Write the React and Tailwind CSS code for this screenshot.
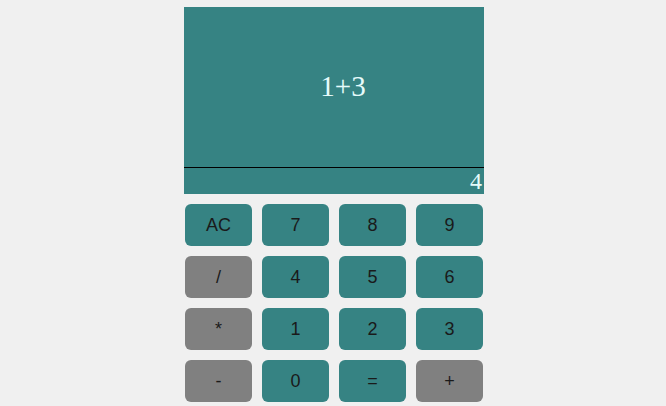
export default function App() {
  const keys = [
    { label: "AC", op: false },
    { label: "7", op: false },
    { label: "8", op: false },
    { label: "9", op: false },
    { label: "/", op: true },
    { label: "4", op: false },
    { label: "5", op: false },
    { label: "6", op: false },
    { label: "*", op: true },
    { label: "1", op: false },
    { label: "2", op: false },
    { label: "3", op: false },
    { label: "-", op: true },
    { label: "0", op: false },
    { label: "=", op: false },
    { label: "+", op: true },
  ];

  return (
    <div className="min-h-[406px] w-full bg-[#f0f0f0] flex justify-center pt-[7px] pl-[2px]">
      <div className="w-[300px] flex flex-col">
        {/* DISPLAY */}
        <div className="bg-[#368383] text-[#e6fbfb] font-['Liberation_Serif',serif]">
          <div className="h-[161px] flex items-center justify-center pl-[18px] text-[29px] border-b border-black">
            1+3
          </div>
          <div className="h-[26px] flex items-end justify-end pr-[2px] text-[24px] leading-[26px]">
            4
          </div>
        </div>

        {/* KEYS */}
        <div className="grid grid-cols-4 gap-x-[10px] gap-y-[10px] px-[1px] mt-[10px]">
          {keys.map((k) => (
            <button
              key={k.label}
              className={`h-[42px] rounded-[6px] text-[18px] text-[#1a1a1a] font-['Liberation_Sans',Arial,sans-serif] ${
                k.op ? "bg-[#808080]" : "bg-[#368383]"
              }`}
            >
              {k.label}
            </button>
          ))}
        </div>
      </div>
    </div>
  );
}
